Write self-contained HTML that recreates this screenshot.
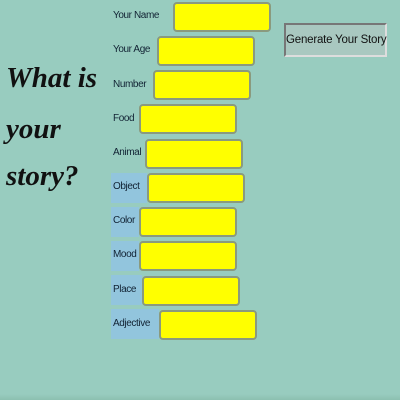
<!DOCTYPE html>
<html><head><style>
html,body{margin:0;padding:0;width:400px;height:400px;overflow:hidden;background:#98ccbf;font-family:"Liberation Sans",sans-serif;}
.t{position:absolute;left:6px;font:italic bold 29px "Liberation Serif",serif;color:#111;}
.bg{position:absolute;left:111px;background:#92c5dd;}
.l{position:absolute;left:113px;font-size:10px;letter-spacing:-0.4px;color:#123;white-space:nowrap;}
.i{position:absolute;width:94px;height:26px;background:#ffff00;border:2px solid #8a9a7e;border-radius:4px;}
.btn{position:absolute;left:284px;top:23px;width:99px;height:30px;background:#a9c8c0;border:2px solid;border-color:#777 #ddd #ddd #777;font-size:11.5px;letter-spacing:-0.2px;color:#111;text-align:center;line-height:31px;white-space:nowrap;}
.foot{position:absolute;left:0;top:394px;width:400px;height:6px;background:linear-gradient(#98ccbf,#8cc0b0);}
</style></head><body>
<div class="t" style="top:62px">What is</div>
<div class="t" style="top:113px">your</div>
<div class="t" style="top:160px">story?</div>

<div class="bg" style="top:173px;width:36px;height:30px"></div>
<div class="bg" style="top:207px;width:28px;height:30px"></div>
<div class="bg" style="top:241px;width:28px;height:30px"></div>
<div class="bg" style="top:275px;width:31px;height:30px"></div>
<div class="bg" style="top:309px;width:48px;height:30px"></div>

<div class="l" style="top:10px">Your Name</div><div class="i" style="left:173px;top:2px"></div>
<div class="l" style="top:44px">Your Age</div><div class="i" style="left:157px;top:36px"></div>
<div class="l" style="top:79px">Number</div><div class="i" style="left:153px;top:70px"></div>
<div class="l" style="top:113px">Food</div><div class="i" style="left:139px;top:104px"></div>
<div class="l" style="top:147px">Animal</div><div class="i" style="left:145px;top:139px"></div>
<div class="l" style="top:181px">Object</div><div class="i" style="left:147px;top:173px"></div>
<div class="l" style="top:215px">Color</div><div class="i" style="left:139px;top:207px"></div>
<div class="l" style="top:249px">Mood</div><div class="i" style="left:139px;top:241px"></div>
<div class="l" style="top:284px">Place</div><div class="i" style="left:142px;top:276px"></div>
<div class="l" style="top:318px">Adjective</div><div class="i" style="left:159px;top:310px"></div>

<div class="btn">Generate Your Story</div>
<div class="foot"></div>
</body></html>
